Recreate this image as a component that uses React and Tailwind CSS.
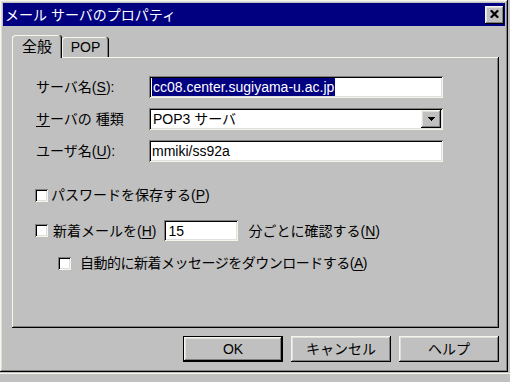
import React from 'react';

const raised = 'shadow-[inset_-1px_-1px_#000,inset_1px_1px_#f6f6e8,inset_-2px_-2px_#808080,inset_2px_2px_#dfdfdf]';
const sunken = 'shadow-[inset_1px_1px_#808080,inset_-1px_-1px_#f6f6e8,inset_2px_2px_#000,inset_-2px_-2px_#dfdfdf]';

const Key = ({ children }) => <span className="underline underline-offset-[2px]">{children}</span>;

const Checkbox = () => <div className={`h-[13px] w-[13px] shrink-0 bg-white ${sunken}`} />;

const Field = ({ children }) => (
    <div className={`flex h-[22px] w-[294px] items-center bg-white pl-[3px] ${sunken}`}>{children}</div>
);

const Button = ({ children, primary }) => (
    <div className={`h-[26px] w-[100px] ${primary ? 'border border-black' : ''}`}>
        <div className={`flex h-full w-full items-center justify-center bg-[#c0c0c0] ${raised}`}>{children}</div>
    </div>
);

const App = () => (
    <div className="h-[382px] w-[510px] overflow-hidden bg-[#c0c0c0] font-['Liberation_Sans','Noto_Sans_CJK_JP',sans-serif] text-[14px] leading-none text-black">
        <div className={`h-[372px] w-[508px] bg-[#c0c0c0] p-[3px] ${raised}`}>
            {/* title bar */}
            <div className="flex h-[23px] items-center justify-between bg-[#000080] pl-[2px] pr-[1px]">
                <span className="text-white">メール サーバのプロパティ</span>
                <div className={`flex h-[18px] w-[19px] items-center justify-center bg-[#c0c0c0] pb-[1px] ${raised}`}>
                    <svg width="9" height="8" viewBox="0 0 9 8">
                        <path d="M0.8 0.3 L8.2 7.7 M8.2 0.3 L0.8 7.7" stroke="#000" strokeWidth="2.2" />
                    </svg>
                </div>
            </div>

            {/* tabs */}
            <div className="ml-[9px] mt-[9px] flex h-[22px] items-start">
                <div className="relative z-10 flex h-[23px] w-[50px] items-center justify-center rounded-t-[3px] bg-[#c0c0c0] pb-[1px] text-[15px] shadow-[inset_-1px_0_#000,inset_1px_1px_#f6f6e8,inset_-2px_0_#808080]">
                    全般
                </div>
                <div className="mt-[2px] flex h-[20px] w-[47px] items-center justify-center rounded-t-[3px] shadow-[inset_-1px_0_#000,inset_1px_1px_#f6f6e8,inset_-2px_0_#808080]">
                    POP
                </div>
            </div>

            {/* panel */}
            <div className="ml-[9px] h-[271px] w-[487px] pl-[23px] pt-[19px] shadow-[inset_-1px_-1px_#000,inset_1px_1px_#f6f6e8,inset_-2px_-2px_#808080]">
                <div className="flex h-[22px] items-center pl-[1px]">
                    <span className="w-[113px]">サーバ名(<Key>S</Key>):</span>
                    <Field>
                        <span className="bg-[#000080] px-[1px] py-[2px] text-white">cc08.center.sugiyama-u.ac.jp</span>
                    </Field>
                </div>
                <div className="mt-[10px] flex h-[22px] items-center pl-[1px]">
                    <span className="w-[113px]"><Key>サ</Key>ーバの 種類</span>
                    <div className={`flex h-[22px] w-[294px] items-center justify-between bg-white pl-[4px] pr-[2px] ${sunken}`}>
                        <span>POP3 サーバ</span>
                        <div className={`flex h-[18px] w-[20px] items-center justify-center bg-[#c0c0c0] ${raised}`}>
                            <svg width="7" height="4" viewBox="0 0 7 4" shapeRendering="crispEdges">
                                <path d="M0 0 H7 L3.5 4 Z" fill="#000" />
                            </svg>
                        </div>
                    </div>
                </div>
                <div className="mt-[10px] flex h-[22px] items-center pl-[1px]">
                    <span className="w-[113px]">ユーザ名(<Key>U</Key>):</span>
                    <Field>
                        <span>mmiki/ss92a</span>
                    </Field>
                </div>

                <div className="mt-[23px] flex h-[20px] items-center gap-[3px]">
                    <Checkbox />
                    <span>パスワードを保存する(<Key>P</Key>)</span>
                </div>
                <div className="mt-[15px] flex h-[21px] items-center">
                    <Checkbox />
                    <span className="ml-[5px]">新着メールを(<Key>H</Key>)</span>
                    <div className={`ml-[8px] flex h-[21px] w-[74px] items-center bg-white pl-[4px] ${sunken}`}>15</div>
                    <span className="ml-[10px]">分ごとに確認する(<Key>N</Key>)</span>
                </div>
                <div className="ml-[23px] mt-[12px] flex h-[20px] items-center gap-[9px]">
                    <Checkbox />
                    <span className="tracking-[-0.5px]">自動的に新着メッセージをダウンロードする(<Key>A</Key>)</span>
                </div>
            </div>

            {/* buttons */}
            <div className="ml-[180px] mt-[8px] flex gap-[8px]">
                <Button primary>OK</Button>
                <Button>キャンセル</Button>
                <Button>ヘルプ</Button>
            </div>
        </div>
        <div className="mt-[1px] h-[1px] w-full bg-[#f6f6e8]" />
    </div>
);

export default App;
